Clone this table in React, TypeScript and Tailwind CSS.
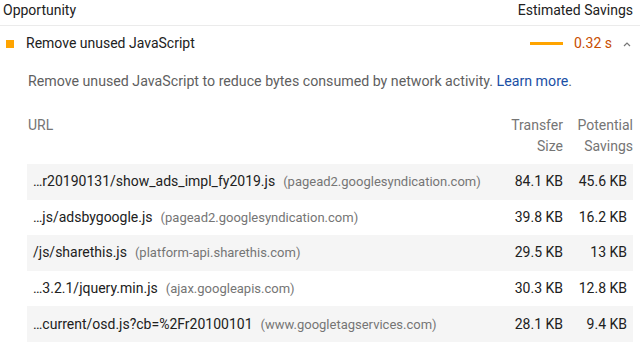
import React from 'react';

const rows = [
    { url: '…r20190131/show_ads_impl_fy2019.js', host: '(pagead2.googlesyndication.com)', size: '84.1 KB', savings: '45.6 KB' },
    { url: '…js/adsbygoogle.js', host: '(pagead2.googlesyndication.com)', size: '39.8 KB', savings: '16.2 KB' },
    { url: '/js/sharethis.js', host: '(platform-api.sharethis.com)', size: '29.5 KB', savings: '13 KB' },
    { url: '…3.2.1/jquery.min.js', host: '(ajax.googleapis.com)', size: '30.3 KB', savings: '12.8 KB' },
    { url: '…current/osd.js?cb=%2Fr20100101', host: '(www.googletagservices.com)', size: '28.1 KB', savings: '9.4 KB' },
];

export default function App() {
    return (
        <div className="w-[640px] h-[350px] bg-white overflow-hidden font-['Roboto',sans-serif] text-[14px] text-[#212121]">
            {/* column header */}
            <div className="flex justify-between items-start h-[26px] pt-[1px] pl-[3px] pr-[7px] border-b border-[#ebebeb] leading-[18px]">
                <span>Opportunity</span>
                <span>Estimated Savings</span>
            </div>

            {/* audit summary */}
            <div className="flex items-center h-[35px] pl-[6px] pr-[9px]">
                <div className="w-[8px] h-[8px] bg-[#ffa400]" />
                <span className="ml-[12px] flex-1">Remove unused JavaScript</span>
                <div className="w-[33px] h-[3px] bg-[#ffa400]" />
                <span className="ml-[11px] text-[#c84d00]">0.32 s</span>
                <svg className="ml-[11px]" width="8" height="6" viewBox="0 0 8 6" fill="none">
                    <path d="M1 5 L4 2 L7 5" stroke="#777" strokeWidth="1.2" />
                </svg>
            </div>

            <p className="pt-[10px] pl-[28px] leading-[20px] text-[14.2px] text-[#5f5f5f]">
                Remove unused JavaScript to reduce bytes consumed by network activity.{' '}
                <span className="text-[#1a4fa5]">Learn more</span>.
            </p>

            {/* details table */}
            <div className="ml-[27px] w-[606px] mt-[24px]">
                <div className="flex leading-[21px] text-[#757575]">
                    <div className="flex-1 pl-[1px]">URL</div>
                    <div className="w-[80px] text-right">Transfer<br />Size</div>
                    <div className="w-[70px] text-right">Potential<br />Savings</div>
                </div>
                <div className="mt-[7px]">
                    {rows.map((r, i) => (
                        <div key={i} className={`flex items-center h-[35.6px] ${i % 2 === 0 ? 'bg-[#f5f5f5]' : 'bg-white'}`}>
                            <div className="flex-1 pl-[6px] whitespace-nowrap">
                                <span>{r.url}</span>
                                <span className="ml-[8px] text-[13px] text-[#757575]">{r.host}</span>
                            </div>
                            <div className="w-[80px] text-right">{r.size}</div>
                            <div className="w-[70px] text-right pr-[6px]">{r.savings}</div>
                        </div>
                    ))}
                </div>
            </div>
        </div>
    );
}
